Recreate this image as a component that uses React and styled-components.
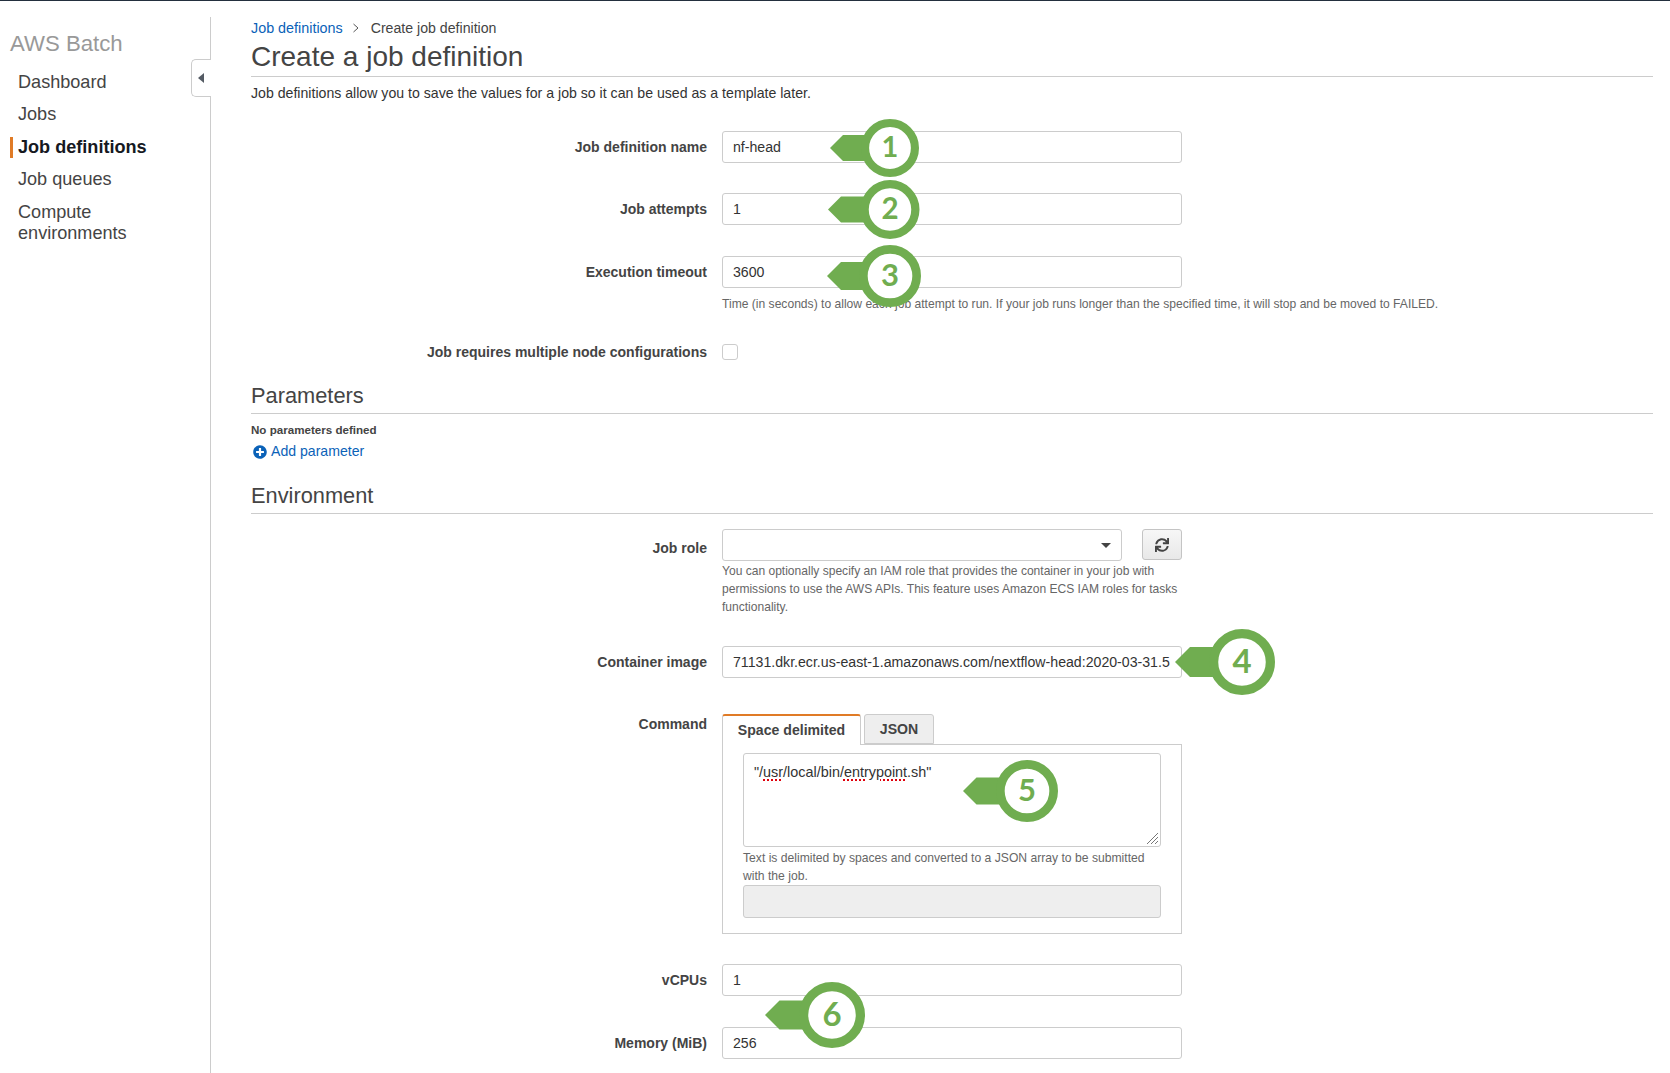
import React from "react";
import styled, { createGlobalStyle } from "styled-components";
import { FaPlusCircle, FaSync } from "react-icons/fa";

const GlobalStyle = createGlobalStyle`
  html, body {
    margin: 0;
    padding: 0;
    background: #fff;
    overflow: hidden;
  }
  body {
    font-family: "Liberation Sans", Arial, sans-serif;
    color: #444;
    font-size: 14px;
  }
`;

const Page = styled.div`
  position: relative;
  display: flex;
  height: 1073px;
  box-sizing: border-box;
  overflow: hidden;
  border-top: 1px solid #232f3e;
`;

const Sidebar = styled.aside`
  position: relative;
  flex: none;
  width: 210px;
  margin-top: 16px;
  padding-top: 13px;
  border-right: 1px solid #ccc;
`;

const Brand = styled.div`
  padding-left: 10px;
  margin-bottom: 13.5px;
  font-size: 22.2px;
  line-height: 28px;
  color: #999;
`;

const NavItem = styled.div`
  padding-left: ${(p) => (p.$active ? "5px" : "8px")};
  margin: 0 0 11px 10px;
  border-left: ${(p) => (p.$active ? "3px solid #e07b26" : "none")};
  font-size: 18.1px;
  line-height: 21.5px;
  font-weight: ${(p) => (p.$active ? "bold" : "normal")};
  color: ${(p) => (p.$active ? "#16191f" : "#444")};
`;

const CollapseTab = styled.div`
  position: absolute;
  top: 42px;
  right: -1px;
  width: 19px;
  height: 36px;
  display: flex;
  align-items: center;
  justify-content: center;
  background: #fff;
  border: 1px solid #ccc;
  border-right: none;
  border-radius: 5px 0 0 5px;
  &::before {
    content: "";
    margin-right: 2px;
    border-style: solid;
    border-width: 5px 6px 5px 0;
    border-color: transparent #545b64 transparent transparent;
  }
`;

const Main = styled.main`
  flex: none;
  width: 1402px;
  margin-left: 40px;
  padding-top: 17px;
`;

const Breadcrumb = styled.div`
  display: flex;
  align-items: center;
  height: 20px;
  font-size: 14.15px;
  color: #444;
`;

const Link = styled.a`
  font-size: 14.35px;
  color: #0b62b8;
`;

const CrumbSep = styled.svg`
  width: 8px;
  height: 10px;
  margin: 0 11px 0 9px;
`;

const PageTitle = styled.h1`
  margin: 1px 0 0;
  padding-top: 1px;
  padding-bottom: 2px;
  border-bottom: 1px solid #ccc;
  font-size: 28px;
  line-height: 34px;
  font-weight: normal;
  color: #444;
`;

const Intro = styled.p`
  margin: 6px 0 28px;
  font-size: 14.13px;
  line-height: 20px;
  color: #333;
`;

const Row = styled.div`
  display: grid;
  grid-template-columns: 456px 460px;
  column-gap: 15px;
  margin-top: ${(p) => p.$top || 0}px;
  align-items: start;
`;

const Label = styled.label`
  padding-top: ${(p) => p.$shift || 0}px;
  text-align: right;
  font-size: 14px;
  font-weight: bold;
  line-height: ${(p) => p.$height || 32}px;
  color: #444;
`;

const Field = styled.div`
  box-sizing: border-box;
  height: ${(p) => p.$height || 32}px;
  padding: 0 10px;
  border: 1px solid #ccc;
  border-radius: 3px;
  background: ${(p) => (p.$disabled ? "#eee" : "#fff")};
  font-size: 14.15px;
  line-height: 30px;
  color: #333;
  white-space: nowrap;
  overflow: hidden;
`;

const Help = styled.div`
  font-size: 12.1px;
  line-height: 18px;
  color: #666;
  white-space: nowrap;
`;

const Checkbox = styled.div`
  box-sizing: border-box;
  width: 16px;
  height: 16px;
  border: 1px solid #ccc;
  border-radius: 3px;
`;

const SectionTitle = styled.h2`
  margin: ${(p) => p.$top}px 0 0;
  padding-bottom: 3px;
  border-bottom: 1px solid #ccc;
  font-size: 21.8px;
  line-height: 28px;
  font-weight: normal;
  color: #444;
`;

const EmptyNote = styled.div`
  margin-top: 8px;
  font-size: 11.6px;
  line-height: 16px;
  font-weight: bold;
  color: #444;
`;

const AddLink = styled.a`
  display: flex;
  align-items: center;
  gap: 4px;
  margin: 4px 0 0 2px;
  font-size: 14.1px;
  line-height: 18px;
  color: #0b62b8;
  svg {
    width: 14px;
    height: 14px;
    margin-top: 1px;
  }
`;

const RoleControls = styled.div`
  display: flex;
  justify-content: space-between;
`;

const Select = styled.div`
  position: relative;
  box-sizing: border-box;
  width: 400px;
  height: 32px;
  border: 1px solid #ccc;
  border-radius: 3px;
  background: #fff;
  &::after {
    content: "";
    position: absolute;
    top: 13px;
    right: 10px;
    border-style: solid;
    border-width: 5px 5px 0;
    border-color: #444 transparent transparent;
  }
`;

const IconButton = styled.button`
  box-sizing: border-box;
  width: 40px;
  height: 31px;
  padding: 0;
  display: flex;
  align-items: center;
  justify-content: center;
  border: 1px solid #c4c4c4;
  border-radius: 3px;
  background: linear-gradient(#f7f7f7, #e8e8e8);
  color: #444;
  svg {
    width: 14px;
    height: 14px;
  }
`;

const Tabs = styled.div`
  display: flex;
  gap: 3px;
  height: 30px;
`;

const Tab = styled.div`
  box-sizing: border-box;
  height: ${(p) => (p.$active ? "31px" : "30px")};
  width: ${(p) => (p.$active ? "139px" : "70px")};
  position: relative;
  z-index: ${(p) => (p.$active ? 1 : 0)};
  text-align: center;
  font-size: 14.1px;
  font-weight: bold;
  line-height: 28px;
  color: #444;
  background: ${(p) => (p.$active ? "#fff" : "#eee")};
  border: 1px solid #ccc;
  border-top: ${(p) => (p.$active ? "2px solid #e07b26" : "1px solid #ccc")};
  border-bottom: ${(p) => (p.$active ? "none" : "1px solid #ccc")};
  border-radius: 3px 3px 0 0;
`;

const TabPanel = styled.div`
  box-sizing: border-box;
  height: 190px;
  padding: 8px 20px 0;
  border: 1px solid #ccc;
`;

const TextArea = styled.div`
  position: relative;
  box-sizing: border-box;
  height: 94px;
  padding: 6px 10px;
  border: 1px solid #ccc;
  border-radius: 3px;
  font-size: 14.4px;
  line-height: 25px;
  color: #333;
`;

const Misspelt = styled.span`
  text-decoration: underline dotted #e0000b;
  text-underline-offset: 2px;
  text-decoration-thickness: 1.5px;
`;

const ResizeGrip = styled.svg`
  position: absolute;
  right: 1px;
  bottom: 1px;
  width: 13px;
  height: 13px;
`;

const HelpBlock = styled(Help)`
  margin-top: ${(p) => p.$top || 0}px;
  font-size: ${(p) => p.$size || 12.1}px;
  white-space: ${(p) => (p.$nowrap ? "nowrap" : "normal")};
`;

const BadgeWrap = styled.svg`
  position: absolute;
  left: ${(p) => p.$left}px;
  top: ${(p) => p.$top}px;
  overflow: visible;
`;

const BadgeNumber = styled.text`
  font-family: Lato, "Open Sans", sans-serif;
  font-weight: bold;
  fill: #70ad50;
  text-anchor: middle;
`;

// callouts sit on top of the form, coordinates are page pixels
const badges = [
  { n: 1, cx: 890, cy: 147, r: 29, tip: 830, half: 13 },
  { n: 2, cx: 890, cy: 208, r: 29.5, tip: 828, half: 13 },
  { n: 3, cx: 890, cy: 275, r: 31, tip: 827, half: 14 },
  { n: 4, cx: 1242, cy: 661, r: 33, tip: 1175, half: 15 },
  { n: 5, cx: 1027, cy: 790, r: 31, tip: 963, half: 13.5 },
  { n: 6, cx: 832, cy: 1014, r: 33, tip: 765, half: 14.5 },
];

function Badge({ n, cx, cy, r, tip, half }) {
  const w = cx - tip;
  const stroke = r * 0.28;
  return (
    <BadgeWrap $left={tip} $top={cy - r} width={w + r} height={r * 2} viewBox={`0 0 ${w + r} ${r * 2}`}>
      <path
        d={`M0 ${r} L${half} ${r - half} H${w} V${r + half} H${half} Z`}
        fill="#70ad50"
      />
      <circle cx={w} cy={r} r={r - stroke / 2} fill="#fff" stroke="#70ad50" strokeWidth={stroke} />
      <BadgeNumber x={w} y={r + r * 0.32} fontSize={r}>
        {n}
      </BadgeNumber>
    </BadgeWrap>
  );
}

export default function App() {
  return (
    <>
      <GlobalStyle />
      <Page>
        <Sidebar>
          <Brand>AWS Batch</Brand>
          <NavItem>Dashboard</NavItem>
          <NavItem>Jobs</NavItem>
          <NavItem $active>Job definitions</NavItem>
          <NavItem>Job queues</NavItem>
          <NavItem>
            Compute
            <br />
            environments
          </NavItem>
          <CollapseTab />
        </Sidebar>
        <Main>
          <Breadcrumb>
            <Link>Job definitions</Link>
            <CrumbSep viewBox="0 0 8 10">
              <path d="M1.5 1 L6 5 L1.5 9" fill="none" stroke="#555" strokeWidth="1" />
            </CrumbSep>
            <span>Create job definition</span>
          </Breadcrumb>
          <PageTitle>Create a job definition</PageTitle>
          <Intro>Job definitions allow you to save the values for a job so it can be used as a template later.</Intro>

          <Row>
            <Label>Job definition name</Label>
            <Field>nf-head</Field>
          </Row>
          <Row $top={30}>
            <Label>Job attempts</Label>
            <Field>1</Field>
          </Row>
          <Row $top={31}>
            <Label>Execution timeout</Label>
            <div>
              <Field>3600</Field>
              <HelpBlock $top={7} $nowrap>
                Time (in seconds) to allow each job attempt to run. If your job runs longer than the specified time, it will stop and be moved to FAILED.
              </HelpBlock>
            </div>
          </Row>
          <Row $top={31}>
            <Label $height={16}>Job requires multiple node configurations</Label>
            <Checkbox />
          </Row>

          <SectionTitle $top={22}>Parameters</SectionTitle>
          <EmptyNote>No parameters defined</EmptyNote>
          <AddLink>
            <FaPlusCircle />
            Add parameter
          </AddLink>

          <SectionTitle $top={22}>Environment</SectionTitle>
          <Row $top={15}>
            <Label $shift={3}>Job role</Label>
            <div>
              <RoleControls>
                <Select />
                <IconButton>
                  <FaSync />
                </IconButton>
              </RoleControls>
              <HelpBlock $top={1} $size={12.05}>
                You can optionally specify an IAM role that provides the container in your job with permissions to use the AWS APIs. This feature uses Amazon ECS IAM roles for tasks functionality.
              </HelpBlock>
            </div>
          </Row>
          <Row $top={30}>
            <Label>Container image</Label>
            <Field>71131.dkr.ecr.us-east-1.amazonaws.com/nextflow-head:2020-03-31.5</Field>
          </Row>
          <Row $top={36}>
            <Label $height={20}>Command</Label>
            <div>
              <Tabs>
                <Tab $active>Space delimited</Tab>
                <Tab>JSON</Tab>
              </Tabs>
              <TabPanel>
                <TextArea>
                  "/<Misspelt>usr</Misspelt>/local/bin/<Misspelt>entrypoint</Misspelt>.sh"
                  <ResizeGrip viewBox="0 0 13 13">
                    <path d="M1 12 L12 1 M5 12 L12 5 M9 12 L12 9" stroke="#777" strokeWidth="1" />
                  </ResizeGrip>
                </TextArea>
                <HelpBlock $top={2} $size={12.15}>Text is delimited by spaces and converted to a JSON array to be submitted with the job.</HelpBlock>
                <Field $disabled $height={33} />
              </TabPanel>
            </div>
          </Row>
          <Row $top={30}>
            <Label>vCPUs</Label>
            <Field>1</Field>
          </Row>
          <Row $top={31}>
            <Label>Memory (MiB)</Label>
            <Field>256</Field>
          </Row>
        </Main>
        {badges.map((b) => (
          <Badge key={b.n} {...b} />
        ))}
      </Page>
    </>
  );
}
